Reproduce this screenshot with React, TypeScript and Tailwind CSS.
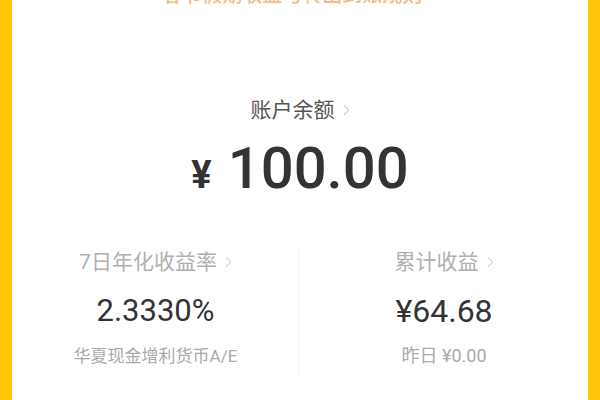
const sans = "font-['Roboto','Noto_Sans_CJK_SC',sans-serif]"

function Chevron({ className = "" }: { className?: string }) {
  return (
    <svg viewBox="0 0 8 14" className={className} fill="none">
      <path d="M1.5 1.5 L6.5 7 L1.5 12.5" stroke="currentColor" strokeWidth="1.2" strokeLinecap="round" strokeLinejoin="round" />
    </svg>
  )
}

export default function App() {
  return (
    <div className={`w-[600px] h-[400px] overflow-hidden bg-[#ffc60a] px-3 ${sans}`}>
      <div className="h-full bg-white flex flex-col items-center">
        {/* notice, mostly scrolled off */}
        <div className="-mt-[19px] h-7 leading-7 text-[20px] text-[#f6b989] font-medium">
          春节假期收益与转出到账规则 &gt;
        </div>

        {/* balance */}
        <div className="mt-[87px] flex items-center gap-2 text-[21px] leading-7 text-[#555555]">
          <span>账户余额</span>
          <Chevron className="w-[7px] h-[12px] text-[#c8c8c8]" />
        </div>
        <div className="mt-[14px] flex items-baseline text-[#333333] font-medium">
          <span className="text-[38px] font-bold mr-4">¥</span>
          <span className="text-[58px] leading-[60px]">100.00</span>
        </div>

        {/* stats */}
        <div className="mt-[44px] w-full grid grid-cols-2">
          <div className="flex flex-col items-center border-r border-[#f3f3f3] pb-2">
            <div className="flex items-center gap-2 text-[21px] leading-7 text-[#b0b0b0]">
              <span>7日年化收益率</span>
              <Chevron className="w-[7px] h-[12px] text-[#d0d0d0]" />
            </div>
            <div className="mt-[19px] text-[31px] leading-8 text-[#333333]">2.3330%</div>
            <div className="mt-[17px] text-[17px] leading-6 text-[#aaaaaa]">华夏现金增利货币A/E</div>
          </div>
          <div className="flex flex-col items-center pb-2">
            <div className="flex items-center gap-2 text-[21px] leading-7 text-[#b0b0b0]">
              <span>累计收益</span>
              <Chevron className="w-[7px] h-[12px] text-[#d0d0d0]" />
            </div>
            <div className="mt-[19px] text-[32px] leading-8 text-[#333333]">¥64.68</div>
            <div className="mt-[17px] text-[18px] leading-6 text-[#aaaaaa]">昨日 ¥0.00</div>
          </div>
        </div>
      </div>
    </div>
  )
}
